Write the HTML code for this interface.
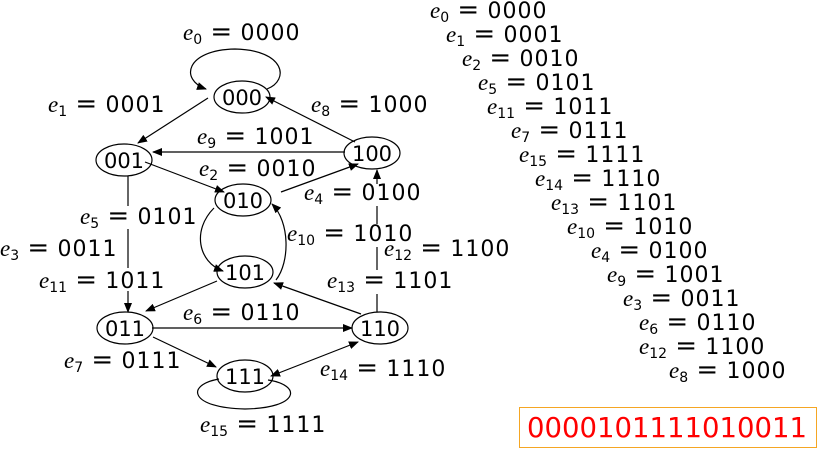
<!DOCTYPE html>
<html><head><style>
html,body{margin:0;padding:0;background:#fff;width:817px;height:449px;overflow:hidden}
svg{display:block}
text{font-family:"DejaVu Sans","Liberation Sans",sans-serif;font-size:22px;fill:#000}
.e{font-family:"Liberation Serif",serif;font-style:italic;font-size:23px}
.s{font-size:14px}
.q{font-size:26px}
.d{letter-spacing:1px}
.n{font-size:21px}
</style></head><body>
<svg width="817" height="449" viewBox="0 0 817 449">
<defs><marker id="a" markerWidth="10" markerHeight="8" refX="9" refY="4" orient="auto" markerUnits="userSpaceOnUse"><path d="M0,0 L10,4 L0,8z" fill="#000"/></marker>
<marker id="b" markerWidth="10" markerHeight="8" refX="1" refY="4" orient="auto" markerUnits="userSpaceOnUse"><path d="M10,0 L0,4 L10,8z" fill="#000"/></marker></defs>
<g fill="none" stroke="#000" stroke-width="1.2">
<ellipse cx="242" cy="97" rx="28" ry="16"/>
<ellipse cx="124" cy="160" rx="28" ry="16"/>
<ellipse cx="372" cy="153" rx="28" ry="16"/>
<ellipse cx="243" cy="200" rx="28" ry="16"/>
<ellipse cx="245" cy="272" rx="28" ry="16"/>
<ellipse cx="125" cy="328" rx="28" ry="16"/>
<ellipse cx="380" cy="328" rx="28" ry="16"/>
<ellipse cx="245" cy="376" rx="28" ry="16"/>
<path d="M267,89 C290,80 285,50 235,49 C185,50 180,80 206,89" marker-end="url(#a)"/>
<path d="M208,98 L138,143" marker-end="url(#a)"/>
<path d="M355,142 L266,97" marker-end="url(#a)"/>
<path d="M345,152 L153,152" marker-end="url(#a)"/>
<path d="M145,162 L224,192" marker-end="url(#a)"/>
<path d="M281,192 L358,164" marker-end="url(#a)"/>
<path d="M214,208 C192,230 198,262 223,271" marker-end="url(#a)"/>
<path d="M276,280 C290,262 290,222 272,204" marker-end="url(#a)"/>
<path d="M377,312 L377,294 M377,270 L377,247 M377,224 L377,206"/>
<path d="M377,184 L377,170" marker-end="url(#a)"/>
<path d="M361,314 L274,283" marker-end="url(#a)"/>
<path d="M217,281 L146,311" marker-end="url(#a)"/>
<path d="M128,176 L128,206 M128,229 L128,268"/>
<path d="M128,291 L128,312" marker-end="url(#a)"/>
<path d="M152,328 L352,328" marker-end="url(#a)"/>
<path d="M153,337 L216,367" marker-end="url(#a)"/>
<path d="M271,376 L358,342" marker-start="url(#b)" marker-end="url(#a)"/>
<path d="M219,379 C185,385 190,408 245,409 C300,408 302,385 268,380"/>
</g>
<g text-anchor="middle" class="n">
<text x="242" y="105" class="n">000</text><text x="124" y="168" class="n">001</text><text x="372" y="161" class="n">100</text>
<text x="243" y="208" class="n">010</text><text x="245" y="280" class="n">101</text><text x="125" y="336" class="n">011</text>
<text x="380" y="336" class="n">110</text><text x="245" y="384" class="n">111</text>
</g>
<g>
<text x="183" y="40"><tspan class="e">e</tspan><tspan class="s" dy="4">0</tspan><tspan class="q" dy="-4"> = </tspan><tspan class="d">0000</tspan></text>
<text x="48" y="112"><tspan class="e">e</tspan><tspan class="s" dy="4">1</tspan><tspan class="q" dy="-4"> = </tspan><tspan class="d">0001</tspan></text>
<text x="311" y="112"><tspan class="e">e</tspan><tspan class="s" dy="4">8</tspan><tspan class="q" dy="-4"> = </tspan><tspan class="d">1000</tspan></text>
<text x="197" y="144"><tspan class="e">e</tspan><tspan class="s" dy="4">9</tspan><tspan class="q" dy="-4"> = </tspan><tspan class="d">1001</tspan></text>
<text x="199" y="176"><tspan class="e">e</tspan><tspan class="s" dy="4">2</tspan><tspan class="q" dy="-4"> = </tspan><tspan class="d">0010</tspan></text>
<text x="304" y="200"><tspan class="e">e</tspan><tspan class="s" dy="4">4</tspan><tspan class="q" dy="-4"> = </tspan><tspan class="d">0100</tspan></text>
<text x="80" y="224"><tspan class="e">e</tspan><tspan class="s" dy="4">5</tspan><tspan class="q" dy="-4"> = </tspan><tspan class="d">0101</tspan></text>
<text x="287" y="241"><tspan class="e">e</tspan><tspan class="s" dy="4">10</tspan><tspan class="q" dy="-4"> = </tspan><tspan class="d">1010</tspan></text>
<text x="384" y="256"><tspan class="e">e</tspan><tspan class="s" dy="4">12</tspan><tspan class="q" dy="-4"> = </tspan><tspan class="d">1100</tspan></text>
<text x="0" y="256"><tspan class="e">e</tspan><tspan class="s" dy="4">3</tspan><tspan class="q" dy="-4"> = </tspan><tspan class="d">0011</tspan></text>
<text x="327" y="288"><tspan class="e">e</tspan><tspan class="s" dy="4">13</tspan><tspan class="q" dy="-4"> = </tspan><tspan class="d">1101</tspan></text>
<text x="39" y="288"><tspan class="e">e</tspan><tspan class="s" dy="4">11</tspan><tspan class="q" dy="-4"> = </tspan><tspan class="d">1011</tspan></text>
<text x="183" y="320"><tspan class="e">e</tspan><tspan class="s" dy="4">6</tspan><tspan class="q" dy="-4"> = </tspan><tspan class="d">0110</tspan></text>
<text x="64" y="368"><tspan class="e">e</tspan><tspan class="s" dy="4">7</tspan><tspan class="q" dy="-4"> = </tspan><tspan class="d">0111</tspan></text>
<text x="320" y="376"><tspan class="e">e</tspan><tspan class="s" dy="4">14</tspan><tspan class="q" dy="-4"> = </tspan><tspan class="d">1110</tspan></text>
<text x="200" y="432"><tspan class="e">e</tspan><tspan class="s" dy="4">15</tspan><tspan class="q" dy="-4"> = </tspan><tspan class="d">1111</tspan></text>
</g>
<g>
<text x="430" y="18"><tspan class="e">e</tspan><tspan class="s" dy="4">0</tspan><tspan class="q" dy="-4"> = </tspan><tspan class="d">0000</tspan></text>
<text x="446" y="42"><tspan class="e">e</tspan><tspan class="s" dy="4">1</tspan><tspan class="q" dy="-4"> = </tspan><tspan class="d">0001</tspan></text>
<text x="462" y="66"><tspan class="e">e</tspan><tspan class="s" dy="4">2</tspan><tspan class="q" dy="-4"> = </tspan><tspan class="d">0010</tspan></text>
<text x="478" y="90"><tspan class="e">e</tspan><tspan class="s" dy="4">5</tspan><tspan class="q" dy="-4"> = </tspan><tspan class="d">0101</tspan></text>
<text x="487" y="114"><tspan class="e">e</tspan><tspan class="s" dy="4">11</tspan><tspan class="q" dy="-4"> = </tspan><tspan class="d">1011</tspan></text>
<text x="511" y="138"><tspan class="e">e</tspan><tspan class="s" dy="4">7</tspan><tspan class="q" dy="-4"> = </tspan><tspan class="d">0111</tspan></text>
<text x="519" y="162"><tspan class="e">e</tspan><tspan class="s" dy="4">15</tspan><tspan class="q" dy="-4"> = </tspan><tspan class="d">1111</tspan></text>
<text x="535" y="186"><tspan class="e">e</tspan><tspan class="s" dy="4">14</tspan><tspan class="q" dy="-4"> = </tspan><tspan class="d">1110</tspan></text>
<text x="551" y="210"><tspan class="e">e</tspan><tspan class="s" dy="4">13</tspan><tspan class="q" dy="-4"> = </tspan><tspan class="d">1101</tspan></text>
<text x="567" y="234"><tspan class="e">e</tspan><tspan class="s" dy="4">10</tspan><tspan class="q" dy="-4"> = </tspan><tspan class="d">1010</tspan></text>
<text x="591" y="258"><tspan class="e">e</tspan><tspan class="s" dy="4">4</tspan><tspan class="q" dy="-4"> = </tspan><tspan class="d">0100</tspan></text>
<text x="607" y="282"><tspan class="e">e</tspan><tspan class="s" dy="4">9</tspan><tspan class="q" dy="-4"> = </tspan><tspan class="d">1001</tspan></text>
<text x="623" y="306"><tspan class="e">e</tspan><tspan class="s" dy="4">3</tspan><tspan class="q" dy="-4"> = </tspan><tspan class="d">0011</tspan></text>
<text x="639" y="330"><tspan class="e">e</tspan><tspan class="s" dy="4">6</tspan><tspan class="q" dy="-4"> = </tspan><tspan class="d">0110</tspan></text>
<text x="639" y="354"><tspan class="e">e</tspan><tspan class="s" dy="4">12</tspan><tspan class="q" dy="-4"> = </tspan><tspan class="d">1100</tspan></text>
<text x="669" y="378"><tspan class="e">e</tspan><tspan class="s" dy="4">8</tspan><tspan class="q" dy="-4"> = </tspan><tspan class="d">1000</tspan></text>
</g>
<rect x="519.5" y="407.5" width="297" height="40" fill="none" stroke="#f5a623" stroke-width="1"/>
<text x="527" y="437" style="font-size:27.5px;fill:#ff0000">0000101111010011</text>
</svg>
</body></html>
